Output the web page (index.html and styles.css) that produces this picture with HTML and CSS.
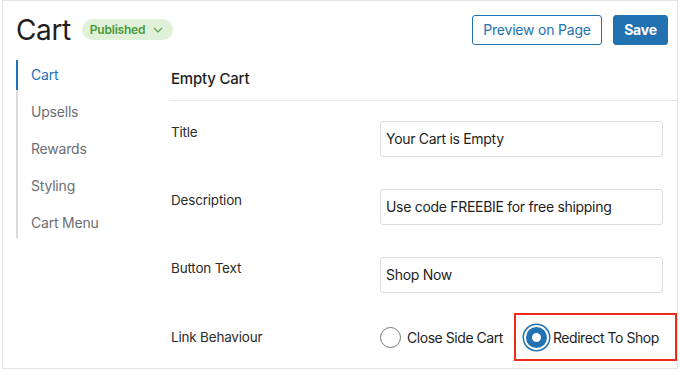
FILE: index.html
```html
<!DOCTYPE html>
<html>
<head>
<meta charset="utf-8">
<link rel="stylesheet" href="styles.css">
</head>
<body>
<div class="frame">
  <header class="top">
    <div class="title-group">
      <h1 class="page-title">Cart</h1>
      <span class="badge">Published
        <svg class="chev" width="10" height="6" viewBox="0 0 10 6"><path d="M1 1l4 4 4-4" fill="none" stroke="#5a9e4b" stroke-width="1.2"/></svg>
      </span>
    </div>
    <div class="actions">
      <button class="btn btn-outline">Preview on Page</button>
      <button class="btn btn-primary">Save</button>
    </div>
  </header>
  <div class="main">
    <nav class="side">
      <div class="side-item active">Cart</div>
      <div class="side-item">Upsells</div>
      <div class="side-item">Rewards</div>
      <div class="side-item">Styling</div>
      <div class="side-item">Cart Menu</div>
    </nav>
    <section class="content">
      <h2 class="section-title">Empty Cart</h2>
      <div class="rows">
        <div class="row">
          <div class="label">Title</div>
          <div class="field">Your Cart is Empty</div>
        </div>
        <div class="row">
          <div class="label">Description</div>
          <div class="field">Use code FREEBIE for free shipping</div>
        </div>
        <div class="row">
          <div class="label">Button Text</div>
          <div class="field">Shop Now</div>
        </div>
        <div class="row row-radio">
          <div class="label">Link Behaviour</div>
          <div class="radios">
            <label class="opt"><span class="radio"></span>Close Side Cart</label>
            <label class="opt opt-sel"><span class="radio checked"></span>Redirect To Shop<span class="highlight"></span></label>
          </div>
        </div>
      </div>
    </section>
  </div>
</div>
</body>
</html>
```
FILE: styles.css
```css
* { box-sizing: border-box; }
body {
  margin: 0;
  background: #fff;
  font-family: "Inter", "Liberation Sans", sans-serif;
  color: #1e1e1e;
  white-space: nowrap;
}
.frame {
  margin-left: 2px;
  width: 676px;
  height: 369px;
  border: 1px solid #e4e4e4;
  overflow: hidden;
}
.top {
  display: flex;
  justify-content: space-between;
  align-items: center;
  height: 57px;
  padding: 0 9px 0 13px;
}
.title-group {
  display: flex;
  align-items: center;
  gap: 11px;
}
.page-title {
  margin: 0;
  font-size: 28px;
  font-weight: 400;
  letter-spacing: -0.4px;
  color: #1e1e1e;
}
.badge {
  display: inline-flex;
  align-items: center;
  gap: 8px;
  height: 21px;
  padding: 0 10px 0 8px;
  border-radius: 11px;
  background: #dff1d9;
  color: #4a9a3b;
  font-size: 12px;
  font-weight: 600;
  letter-spacing: -0.2px;
}
.actions {
  display: flex;
  gap: 11px;
}
.btn {
  height: 30px;
  border-radius: 3px;
  font-family: inherit;
  font-size: 14px;
  letter-spacing: -0.2px;
  padding: 0;
  white-space: nowrap;
}
.btn-outline {
  width: 130px;
  background: #fff;
  border: 1px solid #2271b1;
  color: #2271b1;
}
.btn-primary {
  width: 55px;
  background: #2271b1;
  border: 1px solid #2271b1;
  color: #fff;
  font-weight: 700;
}
.main {
  display: flex;
  padding-top: 2px;
}
.side {
  flex: 0 0 154px;
  margin-left: 13px;
  border-left: 2px solid #dcdcde;
  display: flex;
  flex-direction: column;
  gap: 7px;
  align-self: flex-start;
}
.side-item {
  height: 30px;
  line-height: 30px;
  margin-left: -2px;
  padding-left: 13px;
  border-left: 2px solid transparent;
  font-size: 14px;
  letter-spacing: -0.2px;
  color: #6c6f75;
}
.side-item.active {
  border-left-color: #2271b1;
  color: #2271b1;
}
.content {
  flex: 1;
  min-width: 0;
}
.section-title {
  margin: 0;
  height: 41px;
  line-height: 38px;
  padding-left: 1px;
  font-size: 15px;
  font-weight: 500;
  letter-spacing: -0.2px;
  border-bottom: 1px solid #e4e4e4;
}
.rows {
  display: flex;
  flex-direction: column;
  gap: 32px;
  padding: 20px 14px 0 1px;
}
.row {
  display: flex;
  align-items: flex-start;
}
.label {
  flex: 0 0 209px;
  padding-top: 1px;
  line-height: 20px;
  font-size: 13.5px;
  letter-spacing: -0.2px;
  color: #2c2c2c;
}
.field {
  flex: 1;
  height: 36px;
  line-height: 34px;
  border: 1px solid #dcdcde;
  border-radius: 3px;
  padding: 0 5px;
  font-size: 14px;
  letter-spacing: -0.3px;
  color: #1e1e1e;
}
.row-radio {
  align-items: center;
  height: 24px;
}
.row-radio .label {
  padding-top: 0;
}
.radios {
  display: flex;
  align-items: center;
  gap: 19px;
}
.opt {
  position: relative;
  display: flex;
  align-items: center;
  gap: 6px;
  font-size: 14px;
  letter-spacing: -0.45px;
  color: #1e1e1e;
}
.radio {
  flex: 0 0 21px;
  width: 21px;
  height: 21px;
  border-radius: 50%;
  border: 1px solid #757575;
  background: #fff;
}
.radio.checked {
  position: relative;
  border: 6.5px solid #2271b1;
  box-shadow: 0 0 0 2px #fff, 0 0 0 3.5px #2271b1;
  margin-left: 4px;
  margin-right: 0;
}
.highlight {
  position: absolute;
  left: -8px;
  right: -18px;
  top: -14px;
  bottom: -13px;
  border: 2px solid #ee2a1c;
}
```
